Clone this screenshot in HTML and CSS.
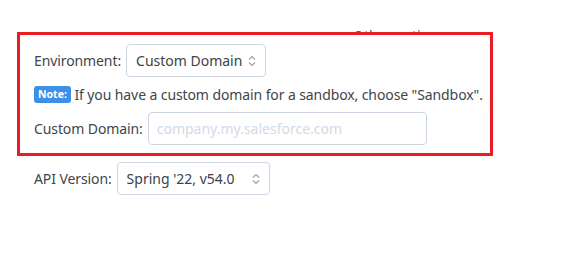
FILE: index.html
```html
<!DOCTYPE html>
<html lang="en">
<head>
    <meta charset="UTF-8">
    <title>Connection Settings</title>
    <link rel="stylesheet" href="styles.css">
</head>
<body>
    <div class="page">
        <div class="heading-peek"><span>Other options</span></div>
        <div class="highlight">
            <div class="row">
                <label class="label">Environment:</label>
                <div class="select env-select">
                    <span>Custom Domain</span>
                    <svg class="chev" width="8" height="12" viewBox="0 0 8 12"><path d="M1 4.5 L4 1.5 L7 4.5 M1 7.5 L4 10.5 L7 7.5" fill="none" stroke="#9aa3b2" stroke-width="1.2"/></svg>
                </div>
            </div>
            <p class="note"><span class="badge">Note:</span> If you have a custom domain for a sandbox, choose "Sandbox".</p>
            <div class="row">
                <label class="label">Custom Domain:</label>
                <input class="text-input" type="text" placeholder="company.my.salesforce.com">
            </div>
        </div>
        <div class="row api-row">
            <label class="label">API Version:</label>
            <div class="select api-select">
                <span>Spring '22, v54.0</span>
                <svg class="chev" width="8" height="12" viewBox="0 0 8 12"><path d="M1 4.5 L4 1.5 L7 4.5 M1 7.5 L4 10.5 L7 7.5" fill="none" stroke="#9aa3b2" stroke-width="1.2"/></svg>
            </div>
        </div>
    </div>
</body>
</html>
```

FILE: styles.css
```css
body {
    margin: 0;
    background-color: #ffffff;
    font-family: "Noto Sans", Arial, sans-serif;
    color: #3f454b;
    font-size: 14px;
}
.page {
    padding: 17px 0 0 17px;
    width: 476px;
}
.heading-peek {
    height: 15px;
    overflow: hidden;
    padding-left: 336px;
    font-size: 14px;
    line-height: 38px;
    color: #555;
    white-space: nowrap;
}
.highlight {
    border: 3px solid #ea1d25;
    padding: 9px 14px 8px 14px;
}
.row {
    display: flex;
    align-items: center;
    gap: 5px;
}
.label {
    white-space: nowrap;
    letter-spacing: -0.1px;
}
.select {
    display: flex;
    align-items: center;
    justify-content: space-between;
    box-sizing: border-box;
    height: 33px;
    padding: 0 9px 0 9px;
    border: 1px solid #cdd5e3;
    border-radius: 4px;
    background-color: #fff;
    color: #3c4248;
    white-space: nowrap;
}
.env-select {
    width: 140px;
}
.api-select {
    width: 153px;
}
.note {
    margin: 9px 0 9px 0;
    line-height: 17px;
    white-space: nowrap;
    letter-spacing: -0.1px;
}
.badge {
    display: inline-block;
    background-color: #3e8fe6;
    color: #fff;
    font-size: 10.5px;
    font-weight: bold;
    line-height: 17px;
    padding: 0 4px;
    border-radius: 3px;
    vertical-align: top;
    letter-spacing: 0;
}
.text-input {
    box-sizing: border-box;
    width: 279px;
    height: 33px;
    padding: 0 8px;
    border: 1px solid #cdd5e3;
    border-radius: 4px;
    font-family: inherit;
    font-size: 14px;
    color: #3c4248;
}
.text-input::placeholder {
    color: #d3dae6;
}
.api-row {
    padding: 6px 0 0 17px;
}
```
